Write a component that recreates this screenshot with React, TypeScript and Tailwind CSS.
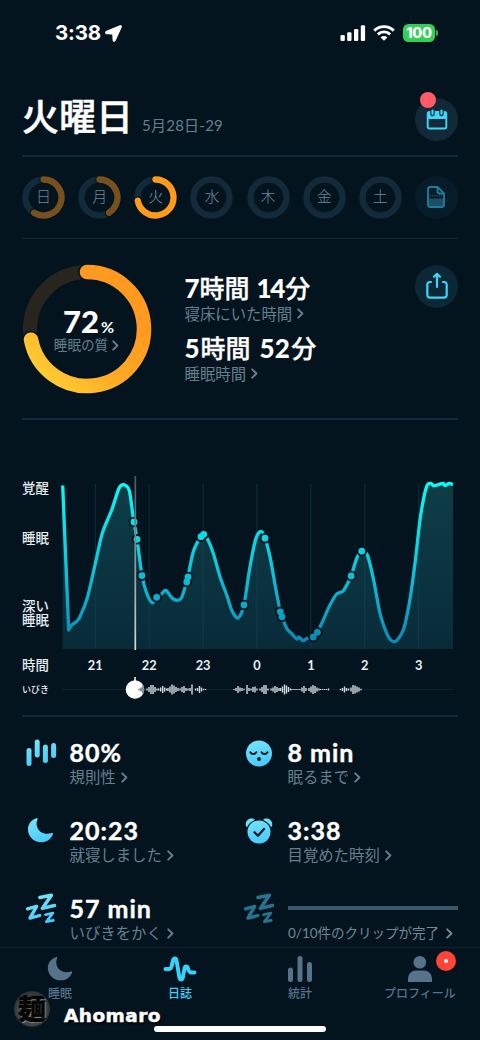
import type { ReactNode } from "react";

const FONT = "font-['Lato','Noto_Sans_CJK_JP',sans-serif]";

/* ---------- helpers ---------- */

function polar(c: number, r: number, deg: number) {
  const a = ((deg - 90) * Math.PI) / 180;
  return `${(c + r * Math.cos(a)).toFixed(2)} ${(c + r * Math.sin(a)).toFixed(2)}`;
}

function arc(c: number, r: number, end: number) {
  return `M${polar(c, r, 0)}A${r} ${r} 0 ${end > 180 ? 1 : 0} 1 ${polar(c, r, end)}`;
}

function Chevron({ className = "" }: { className?: string }) {
  return (
    <svg viewBox="0 0 7 11" className={`h-[11px] w-[7px] shrink-0 ${className}`} fill="none" stroke="currentColor" strokeWidth="1.9" strokeLinecap="round" strokeLinejoin="round">
      <path d="M1.200 1.300 5.400 5.500 1.200 9.700" />
    </svg>
  );
}

function Divider() {
  return <div className="mx-[22px] h-[1.5px] bg-[#122a3a]" />;
}

/* ---------- status bar ---------- */

function StatusBar() {
  return (
    <div className="flex h-[66px] items-center justify-between pr-[42px] pl-[55px] font-['Inter',sans-serif] text-white">
      <div className="flex items-center gap-1">
        <span className="text-[20.5px] leading-none font-bold tracking-[-0.2px]">3:38</span>
        <svg viewBox="0 0 17 17" className="h-[17px] w-[17px]" fill="#fff" stroke="#fff" strokeWidth=".8" strokeLinejoin="round">
          <path d="M15.200.6.9 6.400C-.1 6.900 0 8.500 1.200 8.700l6.500.5.3 6.200c.1 1.300 1.600 1.400 2.200.4L16.500 1.900C16.900.9 16.100.2 15.200.6Z" />
        </svg>
      </div>
      <div className="flex items-center">
        <svg viewBox="0 0 26 16" className="h-4 w-[26px]" fill="#fff">
          <rect x=".5" y="10" width="4.300" height="6" rx="1.200" />
          <rect x="7.200" y="7.300" width="4.300" height="8.700" rx="1.200" />
          <rect x="14" y="4" width="4.300" height="12" rx="1.200" />
          <rect x="20.800" y=".3" width="4.300" height="15.700" rx="1.200" />
        </svg>
        <svg viewBox="0 0 22 16" className="ml-[7px] h-4 w-[22px]" fill="none" stroke="#fff" strokeWidth="2.900">
          <path d="M1.200 5.600A14 14 0 0 1 20.800 5.600" />
          <path d="M4.800 9.400A9 9 0 0 1 17.200 9.400" />
          <path d="M11 15.800 7.600 12.400A4.800 4.800 0 0 1 14.400 12.400Z" fill="#fff" stroke="none" />
        </svg>
        <div className="ml-2 flex items-center gap-px">
          <div className="flex h-[17.500px] w-[32px] items-center justify-center rounded-[5.500px] bg-[#30d158] text-[14.500px] leading-none font-extrabold tracking-[-0.300px]">100</div>
          <div className="h-[6px] w-[2px] rounded-r-full bg-[#30b455]" />
        </div>
      </div>
    </div>
  );
}

/* ---------- header ---------- */

function Header() {
  return (
    <header className="flex h-[89px] items-end justify-between px-[22px] pb-[14px]">
      <div className="mb-[2px] flex items-baseline text-white">
        <h1 className="text-[37px] leading-[44px] font-medium [-webkit-text-stroke:0.5px_#fff]">火曜日</h1>
        <span className="ml-[9px] text-[15px] tracking-[0.250px] text-[#64808f]">5月28日-29</span>
      </div>
      <div className="relative flex h-[43px] w-[43px] items-center justify-center rounded-full bg-[#132938]">
        <svg viewBox="0 0 22 22" className="mt-[-2px] h-[22px] w-[22px]">
          <rect x="1.700" y="4" width="18.600" height="16.500" rx="1.800" fill="none" stroke="#3dd5fa" strokeWidth="1.900" />
          <path d="M2 4h18v7H2Z" fill="#3dd5fa" />
          <path d="M6.500 3v3M15.500 3v3" stroke="#132938" strokeWidth="4.400" strokeLinecap="round" />
          <path d="M6.500 2.600v3.200M15.500 2.600v3.200" stroke="#3dd5fa" strokeWidth="2.200" strokeLinecap="round" />
        </svg>
        <span className="absolute top-[-6px] left-[4.500px] h-4 w-4 rounded-full bg-[#ff5a66]" />
      </div>
    </header>
  );
}

/* ---------- week ---------- */

const WEEK = [
  { label: "日", end: 212, color: "#77501f", text: "text-[#6c8897]" },
  { label: "月", end: 148, color: "#77501f", text: "text-[#6c8897]" },
  { label: "火", end: 260, color: "#ff9a1b", text: "text-[#8aa0ad]" },
  { label: "水", end: 0, color: "", text: "text-[#6c8897]" },
  { label: "木", end: 0, color: "", text: "text-[#6c8897]" },
  { label: "金", end: 0, color: "", text: "text-[#6c8897]" },
  { label: "土", end: 0, color: "", text: "text-[#6c8897]" },
];

function Week() {
  return (
    <div className="flex h-[81px] items-center justify-between px-[22px]">
      {WEEK.map((d) => (
        <div key={d.label} className="grid h-[43px] w-[43px] place-items-center">
          <svg viewBox="0 0 43 43" className="col-start-1 row-start-1 h-[43px] w-[43px]" fill="none" strokeLinecap="round">
            <circle cx="21.500" cy="21.500" r="18" stroke="#132a3b" strokeWidth="6.500" />
            {d.end > 0 && <path d={arc(21.5, 18, d.end)} stroke="#04141e" strokeWidth="8.500" />}
            {d.end > 0 && <path d={arc(21.5, 18, d.end)} stroke={d.color} strokeWidth="6.300" />}
          </svg>
          <span className={`col-start-1 row-start-1 mt-[-1px] text-[15px] leading-none font-light ${d.text}`}>{d.label}</span>
        </div>
      ))}
      <div className="flex h-[43px] w-[43px] items-center justify-center rounded-full bg-[#071c29]">
        <svg viewBox="0 0 20 24" className="h-6 w-5" fill="none">
          <path d="M2.500 13.500h15.500V19.500a2.500 2.500 0 0 1-2.500 2.500H5a2.500 2.500 0 0 1-2.500-2.500Z" fill="#175067" />
          <path d="M4 10.800h12" stroke="#1b647f" strokeWidth="1" strokeDasharray="1.200 1" />
          <path d="M4.500 2h7L18 8.500v11a2.500 2.500 0 0 1-2.500 2.500H4.500A2.500 2.500 0 0 1 2 19.500v-15A2.500 2.500 0 0 1 4.500 2Z" stroke="#237a98" strokeWidth="1.900" strokeLinejoin="round" />
          <path d="M11.500 2.500V6a2.500 2.500 0 0 0 2.500 2.500h3.500" stroke="#237a98" strokeWidth="1.900" />
        </svg>
      </div>
    </div>
  );
}

/* ---------- summary ---------- */

function Duration({ hours, minutes, label, tight = false }: { hours: string; minutes: string; label: string; tight?: boolean }) {
  return (
    <div className="h-[60px]">
      <div className="flex items-baseline text-[25px] leading-[30px] font-medium whitespace-nowrap text-white">
        <span className={`text-[26px] font-black ${tight ? "tracking-[-1px]" : ""}`}>{hours}</span>
        <span className="ml-px [-webkit-text-stroke:0.300px_#fff]">時間</span>
        <span className={`text-[26px] font-black ${tight ? "ml-[7px] tracking-[-1.5px]" : "ml-[9px]"}`}>{minutes}</span>
        <span className="ml-[1.500px] [-webkit-text-stroke:0.300px_#fff]">分</span>
      </div>
      <div className="mt-[0.500px] flex items-center gap-[5px] text-[15.400px] leading-[20px] text-[#64808f]">
        {label}
        <Chevron />
      </div>
    </div>
  );
}

function Summary() {
  return (
    <section className="flex h-[179px] items-start px-[22px] pt-[25px]">
      <div className="-ml-[0.500px] grid h-[130px] w-[130px] place-items-center">
        <svg viewBox="0 0 130 130" className="col-start-1 row-start-1 h-[130px] w-[130px]" fill="none" strokeLinecap="round">
          <defs>
            <linearGradient id="quality" x1="90" y1="30" x2="15" y2="105" gradientUnits="userSpaceOnUse">
              <stop offset="0" stopColor="#ff991f" />
              <stop offset=".5" stopColor="#ffa824" />
              <stop offset="1" stopColor="#ffcb32" />
            </linearGradient>
          </defs>
          <circle cx="65" cy="65" r="57" stroke="#28251f" strokeWidth="14" />
          <path d={arc(65, 57, 259.2)} stroke="#04141e" strokeWidth="18" />
          <path d={arc(65, 57, 259.2)} stroke="url(#quality)" strokeWidth="14.500" />
        </svg>
        <div className="col-start-1 row-start-1 flex flex-col items-center pt-[3px]">
          <div className="flex items-baseline pl-[4px] text-white">
            <span className="text-[31px] leading-[29px] font-black">72</span>
            <span className="ml-[2px] text-[16px] leading-none font-bold">%</span>
          </div>
          <div className="mt-[0.500px] flex items-center gap-[4px] text-[13.600px] leading-[18px] text-[#64808f]">
            睡眠の質
            <Chevron />
          </div>
        </div>
      </div>
      <div className="ml-[33px] flex-1 pt-[9px]">
        <Duration hours="7" minutes="14" label="寝床にいた時間" tight />
        <Duration hours="5" minutes="52" label="睡眠時間" />
      </div>
      <div className="mt-px flex h-[43px] w-[43px] items-center justify-center rounded-full bg-[#0c2836]">
        <svg viewBox="0 0 24 28" className="mt-[-1px] h-7 w-6" fill="none" stroke="#3dd5fa" strokeWidth="2.200" strokeLinecap="round" strokeLinejoin="round">
          <path d="M6 10H5a2.500 2.500 0 0 0-2.700 2.600V23A2.600 2.600 0 0 0 5 25.600h14A2.600 2.600 0 0 0 21.700 23V12.600A2.500 2.500 0 0 0 19 10h-1" />
          <path d="M12 15V3.500M9 4.700 12 1.900l3 2.800" />
        </svg>
      </div>
    </section>
  );
}

/* ---------- chart ---------- */

type Point = [number, number];

const CURVE: Point[] = [
  [68.7, 630], [71.7, 625], [76, 622], [80, 616.7], [87.3, 598], [95, 565], [102.3, 533.3], [111.7, 510], [119, 488.3], [123.7, 484.7],
  [129.3, 490.7], [133.3, 518], [137, 539.3], [142, 575.3], [146.7, 593.3], [152.2, 602.8], [156.7, 597.3], [162, 593.5], [166, 590.4],
  [173.3, 599], [181, 598.6], [186.7, 581.7], [188, 576.7], [193.3, 551.7], [200.7, 536.7], [204, 534.5], [208, 540], [213.3, 553.3], [220, 576.7],
  [226.7, 595], [231.7, 610], [236.7, 617.7], [240, 615.7], [244, 605], [250, 566.7], [256, 538.3], [261.3, 531.3], [265, 538],
  [270, 556.7], [276, 590], [280.3, 611.7], [282, 616.7], [286.7, 628.3], [292, 634], [296.7, 639], [299, 637], [303, 640.7], [307, 638.5], [313.3, 636.7],
  [317.3, 632.3], [323.3, 620], [330, 605], [336.7, 594], [343.3, 590.7], [351, 576], [356.7, 558.3], [361.3, 551], [367.3, 555],
  [373.3, 578.3], [380, 613.3], [386.7, 633.3], [390.7, 640], [393.5, 641.3], [396.7, 640.7], [403.3, 630], [409.3, 603.3], [415, 563.3],
  [420, 520], [424, 496.7], [427.3, 485], [431, 483.5], [433.5, 485.7], [437, 485], [443, 483.3], [445, 485.5], [449, 483.5], [453, 484.5],
];

const DOTS: Point[] = [
  [134, 522], [137, 539.3], [142, 575.6], [156.7, 597.3], [186.8, 582], [188, 577], [201, 536.7], [203.7, 534.3], [244, 605], [265, 538.2],
  [280.3, 611.8], [282, 616.8], [313.3, 637], [317.4, 632.3], [351.2, 576], [361.8, 551.2],
];

const HOURS = ["21", "22", "23", "0", "1", "2", "3"];

/* Each cluster: centre x followed by bar heights, spaced 2px apart. */
const CLUSTERS: [number, number[]][] = [
  [141, [1.5, 4, 8]],
  [152, [2, 5, 9, 9, 5, 2]],
  [162.7, [2, 4, 7, 4, 2]],
  [173, [3, 6, 10, 8, 5, 3]],
  [183, [2, 5, 7, 3]],
  [190, [2, 3, 10]],
  [200.5, [2, 3, 7, 4, 1.5, 1]],
  [239, [1, 3, 7, 4, 3, 1.5]],
  [249, [9, 3, 2]],
  [255, [5, 6, 2]],
  [264, [2, 5, 9, 9, 2]],
  [275, [2, 4, 7, 5, 3]],
  [285.5, [3, 6, 10, 8, 5, 2]],
  [296, [1, 1, 1, 1, 1]],
  [304, [4, 7, 3]],
  [314, [3, 6, 9, 7, 4, 2]],
  [324.5, [1, 1, 1, 1, 2]],
  [344.5, [1.5, 3, 6, 3, 2]],
  [356, [4, 9, 8, 6, 4, 1.5]],
];

function smooth(points: Point[]) {
  let d = "";
  for (let i = 0; i < points.length - 1; i++) {
    const p0 = points[Math.max(i - 1, 0)];
    const p1 = points[i];
    const p2 = points[i + 1];
    const p3 = points[Math.min(i + 2, points.length - 1)];
    const k = 7;
    d += `C${p1[0] + (p2[0] - p0[0]) / k} ${p1[1] + (p2[1] - p0[1]) / k} ${p2[0] - (p3[0] - p1[0]) / k} ${p2[1] - (p3[1] - p1[1]) / k} ${p2[0]} ${p2[1]}`;
  }
  return d;
}

function SleepChart() {
  const line = `M62.7 485.5L68.7 630${smooth(CURVE)}`;
  return (
    <section className="flex h-[295.500px] pl-[22px] text-[13.400px] font-medium text-[#e8eef2]">
      <div className="flex w-[38px] flex-col pt-[60px] leading-[16px] whitespace-nowrap">
        <span>覚醒</span>
        <span className="mt-[34px]">睡眠</span>
        <span className="mt-[53px] leading-[14px]">深い</span>
        <span className="leading-[14px]">睡眠</span>
        <span className="mt-[30px]">時間</span>
        <span className="mt-[10px] text-[9px] leading-[14px]">いびき</span>
      </div>
      <svg viewBox="60 420 400 295.5" className="h-[295.500px] w-[400px]" fill="none">
        <defs>
          <linearGradient id="depth" x1="0" y1="484" x2="0" y2="645" gradientUnits="userSpaceOnUse">
            <stop offset="0" stopColor="#08fbf5" />
            <stop offset=".5" stopColor="#0bc9dc" />
            <stop offset="1" stopColor="#0c87b2" />
          </linearGradient>
          <linearGradient id="area" x1="0" y1="484" x2="0" y2="649" gradientUnits="userSpaceOnUse">
            <stop offset="0" stopColor="#0e3d46" />
            <stop offset="1" stopColor="#082b3a" />
          </linearGradient>
          <linearGradient id="playhead" x1="0" y1="476" x2="0" y2="650" gradientUnits="userSpaceOnUse">
            <stop offset="0" stopColor="#4a565d" />
            <stop offset=".5" stopColor="#8d979c" />
            <stop offset="1" stopColor="#d4dadd" />
          </linearGradient>
        </defs>
        <path d={`${line}V649H62.7Z`} fill="url(#area)" />
        {HOURS.map((h, i) => (
          <g key={h}>
            <path d={`M${95.3 + i * 53.9} 484V649`} stroke="#17495a" strokeOpacity=".5" />
            <text x={95.3 + i * 53.9} y="669.5" textAnchor="middle" fill="#e8eef2" className="text-[12.800px] font-bold">
              {h}
            </text>
          </g>
        ))}
        <path d={line} stroke="url(#depth)" strokeWidth="3.3" strokeLinejoin="round" />
        {DOTS.map(([x, y]) => (
          <circle key={x} cx={x} cy={y} r="5.3" fill="#04141e" />
        ))}
        {DOTS.map(([x, y]) => (
          <circle key={x} cx={x} cy={y} r="3.4" fill="url(#depth)" />
        ))}
        <path d="M135.3 476V650" stroke="url(#playhead)" strokeWidth="1.7" />
        <path d="M62.7 689.5H453" stroke="#0a2431" />
        <path d="M135 677V684" stroke="#fff" strokeWidth="1.5" />
        <circle cx="135" cy="689.5" r="9.3" fill="#fff" />
        {CLUSTERS.map(([cx, bars]) =>
          bars.map((h, i) => (
            <rect
              key={`${cx}-${i}`}
              x={cx + (i - (bars.length - 1) / 2) * 2 - 0.7}
              y={689.5 - h / 2}
              width="1.4"
              height={h}
              fill={cx === 141 ? "#5b656b" : "#d3dbdf"}
            />
          )),
        )}
      </svg>
    </section>
  );
}

/* ---------- stats ---------- */

function ZzzIcon({ dim = false }: { dim?: boolean }) {
  return (
    <svg viewBox="0 0 32 32" className="h-8 w-8" fill="none" stroke={dim ? "#26758f" : "url(#ice)"} strokeLinecap="round" strokeLinejoin="round">
      <path d="M14.800 5.500 26.400 3.300 17.300 16.400 29.500 13.500" strokeWidth="3.500" />
      <path d="M2.500 16.800 11.700 14.400 4.900 26.100 14.700 23.500" strokeWidth="3.300" />
      <path d="M20.500 22.700 27.900 21 21.300 29.700 28.300 28.400" strokeWidth="2.700" />
    </svg>
  );
}

function BarsIcon() {
  return (
    <svg viewBox="0 0 32 32" className="h-8 w-8" fill="url(#ice)">
      <rect x="1.500" y="12" width="5" height="18" rx="2.500" />
      <rect x="9.700" y="3.500" width="5" height="18" rx="2.500" />
      <rect x="17.900" y="8.500" width="5" height="18.500" rx="2.500" />
      <rect x="26.100" y="7" width="5" height="15" rx="2.500" />
    </svg>
  );
}

function MoonIcon() {
  return (
    <svg viewBox="0 0 32 32" className="h-8 w-8" fill="url(#ice)">
      <path d="M11.300 4.300C5.500 6.200 2.200 11.300 3.100 17.200 4.100 24 10.300 28.600 16.900 28.200c5.600-.3 9.500-3.700 11-7.900.4-1.100-.3-1.500-1.200-1.200-6.600 2.100-12.900-.7-14.600-6.400-.9-2.900-.5-5.300.5-7.300.4-.8-.3-1.500-1.300-1.100Z" />
    </svg>
  );
}

function FaceIcon() {
  return (
    <svg viewBox="0 0 32 32" className="h-8 w-8" fill="none">
      <circle cx="16" cy="17.500" r="13" fill="url(#ice)" />
      <g stroke="#04141e" strokeWidth="1.900" strokeLinecap="round">
        <path d="M7.300 16.300c1.300 2.300 4.600 2.300 6 0M18.500 16.300c1.300 2.300 4.600 2.300 6 0" />
      </g>
      <circle cx="16" cy="23" r="1.900" fill="#04141e" />
    </svg>
  );
}

function AlarmIcon() {
  return (
    <svg viewBox="0 0 32 32" className="h-8 w-8" fill="none">
      <path d="M3.100 12.400C1.300 7.500 5.800 2.900 11 4.900c.8.300.9 1 .2 1.400C8.300 7.700 6 9.600 4.600 12.200c-.4.800-1.200.9-1.500.2ZM28.900 12.400c1.800-4.900-2.700-9.500-7.900-7.500-.8.300-.9 1-.2 1.400 2.900 1.400 5.200 3.300 6.600 5.900.4.800 1.200.9 1.500.2Z" fill="url(#ice)" />
      <circle cx="16" cy="18" r="11.500" fill="url(#ice)" />
      <path d="M11.500 18.200 15 21.700 21 15" stroke="#04141e" strokeWidth="2.200" strokeLinecap="round" strokeLinejoin="round" />
    </svg>
  );
}

function Stat({ icon, value, label }: { icon: ReactNode; value: string; label: string }) {
  return (
    <div className="flex h-[78px] w-1/2 items-start">
      <div className="-mt-px w-[47.500px] pl-[2.500px]">{icon}</div>
      <div>
        <div className="text-[25px] leading-[30px] font-bold tracking-[1px] whitespace-nowrap text-white [-webkit-text-stroke:0.400px_#fff]">{value}</div>
        <div className="mt-[1.500px] flex items-center gap-[5px] text-[15.400px] leading-[19px] whitespace-nowrap text-[#64808f]">
          {label}
          <Chevron />
        </div>
      </div>
    </div>
  );
}

function Stats() {
  return (
    <section className="h-[230px] overflow-hidden pt-[20px] pl-[22px]">
      <svg viewBox="0 0 1 1" className="absolute h-0 w-0">
        <defs>
          <linearGradient id="ice" x1="10" y1="3" x2="18" y2="30" gradientUnits="userSpaceOnUse">
            <stop offset="0" stopColor="#78e4f7" />
            <stop offset="1" stopColor="#48c9fb" />
          </linearGradient>
        </defs>
      </svg>
      <div className="flex w-[436px] flex-wrap">
        <Stat icon={<BarsIcon />} value="80%" label="規則性" />
        <Stat icon={<FaceIcon />} value="8 min" label="眠るまで" />
        <Stat icon={<MoonIcon />} value="20:23" label="就寝しました" />
        <Stat icon={<AlarmIcon />} value="3:38" label="目覚めた時刻" />
        <Stat icon={<ZzzIcon />} value="57 min" label="いびきをかく" />
        <div className="flex h-[78px] w-1/2 items-start">
          <div className="-mt-px w-[48px] pl-[2.500px]">
            <ZzzIcon dim />
          </div>
          <div className="flex-1">
            <div className="mt-[13px] h-[4.500px] bg-[#38596c]" />
            <div className="mt-[14px] flex items-center gap-[7px] text-[13.500px] leading-[19px] whitespace-nowrap text-[#6f8a99]">
              0/10件のクリップが完了
              <Chevron />
            </div>
          </div>
        </div>
      </div>
    </section>
  );
}

/* ---------- tab bar ---------- */

function Tab({ icon, label, active = false }: { icon: ReactNode; label: string; active?: boolean }) {
  return (
    <div className={`flex w-[120px] flex-col items-center pt-[5px] ${active ? "text-[#35d2fb]" : "text-[#56738a]"}`}>
      <div className="flex h-[32px] items-center justify-center">{icon}</div>
      <span className="mt-px text-[12px] leading-[16px] font-medium">{label}</span>
    </div>
  );
}

function TabBar() {
  return (
    <nav className="relative h-[94px] border-t border-[#10232f]">
      <div className="flex">
        <Tab
          label="睡眠"
          icon={
            <svg viewBox="0 0 32 32" className="h-[31px] w-[31px]" fill="currentColor">
              <path d="M11.300 4.300C5.500 6.200 2.200 11.300 3.100 17.200 4.100 24 10.300 28.600 16.900 28.200c5.600-.3 9.500-3.700 11-7.900.4-1.100-.3-1.500-1.200-1.200-6.600 2.100-12.900-.7-14.600-6.400-.9-2.900-.5-5.300.5-7.300.4-.8-.3-1.500-1.300-1.100Z" />
            </svg>
          }
        />
        <Tab
          active
          label="日誌"
          icon={
            <svg viewBox="0 0 34 28" className="h-[28px] w-[34px]" fill="none" stroke="currentColor" strokeWidth="4" strokeLinecap="round" strokeLinejoin="round">
              <path d="M2.500 14h3.300c1.600 0 2.300-.8 2.900-3l1.300-5.500c.7-2.700 3-2.700 3.500 0l2.900 17c.5 2.700 2.900 2.700 3.400 0l1.800-9.300c.5-2.300 2.700-2.300 3.300 0 .8 3 1.300 4.300 3.500 4.300h3" />
            </svg>
          }
        />
        <Tab
          label="統計"
          icon={
            <svg viewBox="0 0 26 28" className="h-[28px] w-[26px]" fill="currentColor">
              <rect x="1" y="12.500" width="5" height="14.500" rx="2.500" />
              <rect x="10.500" y="1" width="5" height="26" rx="2.500" />
              <rect x="20" y="7" width="5" height="20" rx="2.500" />
            </svg>
          }
        />
        <Tab
          label="プロフィール"
          icon={
            <svg viewBox="0 0 26 28" className="h-[28px] w-[26px]" fill="currentColor">
              <circle cx="12.800" cy="7.300" r="6.300" />
              <path d="M1 27V23.500a8 8 0 0 1 8-8h8a8 8 0 0 1 8 8v3.500Z" />
            </svg>
          }
        />
      </div>
      <span className="absolute top-[3px] left-[435.500px] flex h-[20.500px] w-[20.500px] items-center justify-center rounded-full bg-[#ff453a]">
        <span className="h-[3.500px] w-[3.500px] rounded-full bg-white" />
      </span>
      <div className="absolute bottom-[9px] left-[154px] h-[6px] w-[172px] rounded-full bg-white" />
      <div className="absolute top-[43px] left-[14px] flex items-center">
        <div className="flex h-[36px] w-[36px] items-center justify-center overflow-hidden rounded-full border border-[#2c3336] bg-[radial-gradient(circle_at_50%_55%,#b8222d_0,#8d2a31_22%,#4d5253_42%,#303435_75%,#0b0f10_100%)]">
          <span className="text-[28px] leading-none font-black text-[#060606] [-webkit-text-stroke:0.500px_#060606] [text-shadow:1px_1px_0_#8b8f90]">麺</span>
        </div>
        <span className="mt-[16px] ml-[14px] font-['DejaVu_Sans',sans-serif] text-[18.500px] leading-none font-bold tracking-[0.450px] text-white [-webkit-text-stroke:0.500px_#fff] [text-shadow:1px_2px_2px_#000]">Ahomaro</span>
      </div>
    </nav>
  );
}

export default function App() {
  return (
    <div lang="ja" className={`flex h-[1040px] w-[480px] flex-col overflow-hidden bg-[#04141e] *:shrink-0 ${FONT}`}>
      <StatusBar />
      <Header />
      <Divider />
      <Week />
      <Divider />
      <Summary />
      <Divider />
      <SleepChart />
      <Divider />
      <Stats />
      <TabBar />
    </div>
  );
}
